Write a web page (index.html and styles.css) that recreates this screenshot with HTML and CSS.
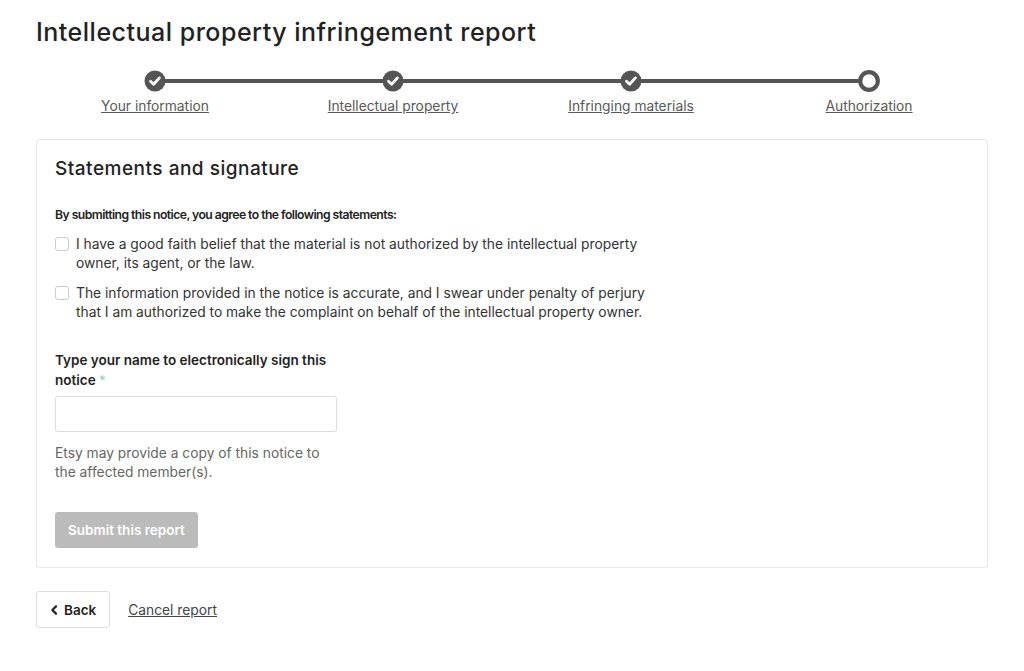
FILE: index.html
```html
<!DOCTYPE html>
<html lang="en">
<head>
    <meta charset="UTF-8">
    <meta name="viewport" content="width=device-width, initial-scale=1.0">
    <title>Intellectual property infringement report</title>
    <link rel="stylesheet" href="styles.css">
</head>
<body>
    <div class="page">
        <h1 class="title">Intellectual property infringement report</h1>

        <ol class="steps">
            <li class="step done">
                <span class="dot">
                    <svg viewBox="0 0 22 22" width="22" height="22"><circle cx="11" cy="11" r="10.5" fill="#555"/><path d="M6.5 11.3l3.1 2.9 5.8-6.3" fill="none" stroke="#fff" stroke-width="2.8" stroke-linecap="round" stroke-linejoin="round"/></svg>
                </span>
                <a href="#">Your information</a>
            </li>
            <li class="step done">
                <span class="dot">
                    <svg viewBox="0 0 22 22" width="22" height="22"><circle cx="11" cy="11" r="10.5" fill="#555"/><path d="M6.5 11.3l3.1 2.9 5.8-6.3" fill="none" stroke="#fff" stroke-width="2.8" stroke-linecap="round" stroke-linejoin="round"/></svg>
                </span>
                <a href="#">Intellectual property</a>
            </li>
            <li class="step done">
                <span class="dot">
                    <svg viewBox="0 0 22 22" width="22" height="22"><circle cx="11" cy="11" r="10.5" fill="#555"/><path d="M6.5 11.3l3.1 2.9 5.8-6.3" fill="none" stroke="#fff" stroke-width="2.8" stroke-linecap="round" stroke-linejoin="round"/></svg>
                </span>
                <a href="#">Infringing materials</a>
            </li>
            <li class="step current">
                <span class="dot">
                    <svg viewBox="0 0 22 22" width="22" height="22"><circle cx="11" cy="11" r="8.8" fill="#fff" stroke="#555" stroke-width="4.2"/></svg>
                </span>
                <a href="#">Authorization</a>
            </li>
        </ol>

        <div class="card">
            <h2 class="card-title">Statements and signature</h2>

            <p class="lead">By submitting this notice, you agree to the following statements:</p>

            <label class="check">
                <input type="checkbox">
                <span>I have a good faith belief that the material is not authorized by the intellectual property owner, its agent, or the law.</span>
            </label>
            <label class="check">
                <input type="checkbox">
                <span>The information provided in the notice is accurate, and I swear under penalty of perjury that I am authorized to make the complaint on behalf of the intellectual property owner.</span>
            </label>

            <div class="field">
                <label class="field-label" for="signature">Type your name to electronically sign this notice <span class="req">*</span></label>
                <input class="text-input" id="signature" type="text">
                <p class="help">Etsy may provide a copy of this notice to the affected member(s).</p>
            </div>

            <button class="submit" disabled>Submit this report</button>
        </div>

        <div class="actions">
            <button class="back">
                <svg viewBox="0 0 10 12" width="8" height="10"><path d="M7.5 1.5L3 6l4.5 4.5" fill="none" stroke="#222" stroke-width="2.8" stroke-linecap="round" stroke-linejoin="round"/></svg>
                Back
            </button>
            <a href="#" class="cancel">Cancel report</a>
        </div>
    </div>
</body>
</html>
```

FILE: styles.css
```css
body {
    margin: 0;
    font-family: 'Inter', 'Roboto', sans-serif;
    color: #222;
    background: #fff;
}
.page {
    width: 952px;
    padding: 16px 36px;
}
.title {
    margin: 0;
    font-size: 25px;
    font-weight: 500;
    line-height: 32px;
    letter-spacing: 0.5px;
    color: #222;
}
.steps {
    list-style: none;
    margin: 22px 0 0;
    padding: 0;
    display: grid;
    grid-template-columns: repeat(4, 1fr);
}
.step {
    position: relative;
    display: flex;
    flex-direction: column;
    align-items: center;
}
.step .dot {
    position: relative;
    z-index: 1;
    height: 22px;
}
.step .dot svg {
    display: block;
}
.step:not(:last-child)::after {
    content: '';
    position: absolute;
    top: 9px;
    left: 50%;
    width: 100%;
    height: 4px;
    background: #555;
}
.step a {
    margin-top: 5px;
    font-size: 13.8px;
    line-height: 18px;
    color: #595959;
    text-decoration: underline;
}
.card {
    margin-top: 24px;
    border: 1px solid #e6e6e6;
    border-radius: 4px;
    padding: 17px 18px 19px;
}
.card-title {
    margin: 0;
    font-size: 19px;
    font-weight: 500;
    line-height: 24px;
    letter-spacing: 0.5px;
}
.lead {
    margin: 25px 0 11px;
    font-size: 12.2px;
    font-weight: 600;
    line-height: 18px;
    letter-spacing: -0.55px;
}
.check {
    display: flex;
    gap: 7px;
    font-size: 13.8px;
    line-height: 19px;
    color: #333;
    margin-bottom: 11px;
}
.check span {
    max-width: 595px;
}
.check input {
    appearance: none;
    flex: none;
    width: 14px;
    height: 14px;
    margin: 2px 0 0;
    border: 1px solid #ccc;
    border-radius: 3px;
    background: #fff;
}
.field {
    margin-top: 28px;
    width: 282px;
}
.field-label {
    display: block;
    font-size: 13.5px;
    font-weight: 600;
    line-height: 20px;
}
.req {
    color: #9cc;
    font-weight: 400;
}
.text-input {
    display: block;
    box-sizing: border-box;
    width: 282px;
    height: 36px;
    margin-top: 6px;
    border: 1px solid #ddd;
    border-radius: 3px;
}
.help {
    margin: 12px 0 0;
    font-size: 13.8px;
    line-height: 19px;
    color: #666;
}
.submit {
    display: block;
    margin-top: 30px;
    height: 36px;
    padding: 0 13px;
    border: none;
    border-radius: 3px;
    background: #bbb;
    color: #fff;
    font-family: inherit;
    font-size: 13.5px;
    font-weight: 600;
}
.actions {
    margin-top: 23px;
    display: flex;
    align-items: center;
    gap: 18px;
}
.back {
    display: flex;
    align-items: center;
    gap: 6px;
    height: 37px;
    padding: 0 13px;
    border: 1px solid #ddd;
    border-radius: 3px;
    background: #fff;
    color: #222;
    font-family: inherit;
    font-size: 13.5px;
    font-weight: 600;
}
.cancel {
    font-size: 13.8px;
    color: #444;
    text-decoration: underline;
}
```
